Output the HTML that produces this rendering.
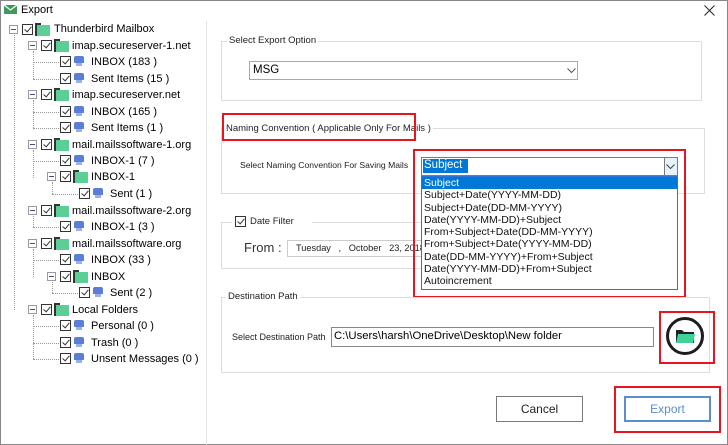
<!DOCTYPE html>
<html><head><meta charset="utf-8"><style>
*{margin:0;padding:0;box-sizing:border-box}
body{width:728px;height:445px;overflow:hidden;background:#fff;font-family:"Liberation Sans",Arial,sans-serif;position:relative;color:#000}
.a{position:absolute}
.win{left:0;top:0;width:728px;height:445px;border:1px solid #888}
.t{font-size:11px;white-space:nowrap}
.s{font-size:9.2px;white-space:nowrap;color:#222}
.cb{position:absolute;width:11px;height:11px;border:1px solid #333;background:#fff}
.cb:after{content:"";position:absolute;left:3px;top:0px;width:3px;height:6px;border:solid #333;border-width:0 1.5px 1.5px 0;transform:rotate(40deg)}
.ex{position:absolute;width:9px;height:9px;border:1px solid #9a9a9a;background:#fff}
.ex:after{content:"";position:absolute;left:1px;top:3px;width:5px;height:1px;background:#4a4a8a}
.fd{position:absolute;width:15px;height:11px;background:#5ccf96}
.fd:before{content:"";position:absolute;left:0;top:-2px;width:6px;height:2px;background:#333}
.fd:after{content:"";position:absolute;left:0;top:0;width:2px;height:11px;background:#333}
.ml{position:absolute;width:12px;height:11px}
.ml:before{content:"";position:absolute;left:1px;top:0;width:10px;height:7px;background:#5b7fd6;border-radius:2px 2px 0 0}
.ml:after{content:"";position:absolute;left:3px;top:7px;width:6px;height:3px;background:#9ab0e8}
.dv{position:absolute;border-left:1px dotted #999}
.dh{position:absolute;border-top:1px dotted #999}
.grp{position:absolute;border:1px solid #dcdcdc}
.gl{position:absolute;background:#fff;padding:0 2px;font-size:9.5px;color:#222}
.box{position:absolute;border:1px solid #a9a9a9;background:#fff}
.red{position:absolute;border:2px solid #e8141e}
.li{font-size:10.5px;height:12.3px;line-height:12.3px;padding-left:2px;color:#111}
</style></head><body>
<div class="a win"></div>
<svg class="a" style="left:4px;top:4px" width="14" height="11"><rect x="0" y="1" width="13" height="9" fill="#3c9a5a"/><path d="M0 1 L6.5 6 L13 1" stroke="#fff" fill="none" stroke-width="1.2"/></svg>
<div class="a t" style="left:21px;top:4px;font-size:11px">Export</div>
<svg class="a" style="left:704px;top:5px" width="11" height="11"><path d="M0.5 0.5 L10.5 10.5 M10.5 0.5 L0.5 10.5" stroke="#222" stroke-width="1"/></svg>
<div class="a" style="left:206px;top:21px;width:1px;height:424px;background:#e3e3e3"></div>

<div class="dv" style="left:14px;top:35px;height:275px"></div>
<div class="dv" style="left:33px;top:51px;height:28px"></div>
<div class="dv" style="left:33px;top:100px;height:28px"></div>
<div class="dv" style="left:33px;top:150px;height:28px"></div>
<div class="dv" style="left:52px;top:182px;height:12px"></div>
<div class="dv" style="left:33px;top:216px;height:11px"></div>
<div class="dv" style="left:33px;top:249px;height:28px"></div>
<div class="dv" style="left:52px;top:282px;height:11px"></div>
<div class="dv" style="left:33px;top:315px;height:44px"></div>
<div class="dh" style="left:33px;top:62px;width:26px"></div><div class="dh" style="left:33px;top:79px;width:26px"></div>
<div class="dh" style="left:33px;top:112px;width:26px"></div><div class="dh" style="left:33px;top:128px;width:26px"></div>
<div class="dh" style="left:33px;top:161px;width:26px"></div><div class="dh" style="left:52px;top:194px;width:26px"></div>
<div class="dh" style="left:33px;top:227px;width:26px"></div><div class="dh" style="left:33px;top:260px;width:26px"></div>
<div class="dh" style="left:52px;top:293px;width:26px"></div>
<div class="dh" style="left:33px;top:326px;width:26px"></div><div class="dh" style="left:33px;top:343px;width:26px"></div><div class="dh" style="left:33px;top:359px;width:26px"></div>

<div class="ex" style="left:9px;top:25px"></div><div class="cb" style="left:22px;top:24px"></div><div class="fd" style="left:35px;top:25px"></div><div class="a t" style="left:54px;top:23px">Thunderbird Mailbox</div>
<div class="ex" style="left:28px;top:41px"></div><div class="cb" style="left:41px;top:40px"></div><div class="fd" style="left:54px;top:41px"></div><div class="a t" style="left:72px;top:40px">imap.secureserver-1.net</div>
<div class="cb" style="left:60px;top:56px"></div><div class="ml" style="left:73px;top:56px"></div><div class="a t" style="left:91px;top:56px">INBOX (183 )</div>
<div class="cb" style="left:60px;top:73px"></div><div class="ml" style="left:73px;top:73px"></div><div class="a t" style="left:91px;top:73px">Sent Items (15 )</div>
<div class="ex" style="left:28px;top:90px"></div><div class="cb" style="left:41px;top:89px"></div><div class="fd" style="left:54px;top:90px"></div><div class="a t" style="left:72px;top:89px">imap.secureserver.net</div>
<div class="cb" style="left:60px;top:106px"></div><div class="ml" style="left:73px;top:106px"></div><div class="a t" style="left:91px;top:106px">INBOX (165 )</div>
<div class="cb" style="left:60px;top:122px"></div><div class="ml" style="left:73px;top:122px"></div><div class="a t" style="left:91px;top:122px">Sent Items (1 )</div>
<div class="ex" style="left:28px;top:140px"></div><div class="cb" style="left:41px;top:139px"></div><div class="fd" style="left:54px;top:140px"></div><div class="a t" style="left:72px;top:139px">mail.mailssoftware-1.org</div>
<div class="cb" style="left:60px;top:155px"></div><div class="ml" style="left:73px;top:155px"></div><div class="a t" style="left:91px;top:155px">INBOX-1 (7 )</div>
<div class="ex" style="left:47px;top:172px"></div><div class="cb" style="left:60px;top:171px"></div><div class="fd" style="left:73px;top:172px"></div><div class="a t" style="left:91px;top:171px">INBOX-1</div>
<div class="cb" style="left:79px;top:188px"></div><div class="ml" style="left:92px;top:188px"></div><div class="a t" style="left:110px;top:188px">Sent (1 )</div>
<div class="ex" style="left:28px;top:206px"></div><div class="cb" style="left:41px;top:205px"></div><div class="fd" style="left:54px;top:206px"></div><div class="a t" style="left:72px;top:205px">mail.mailssoftware-2.org</div>
<div class="cb" style="left:60px;top:221px"></div><div class="ml" style="left:73px;top:221px"></div><div class="a t" style="left:91px;top:221px">INBOX-1 (3 )</div>
<div class="ex" style="left:28px;top:239px"></div><div class="cb" style="left:41px;top:238px"></div><div class="fd" style="left:54px;top:239px"></div><div class="a t" style="left:72px;top:238px">mail.mailssoftware.org</div>
<div class="cb" style="left:60px;top:254px"></div><div class="ml" style="left:73px;top:254px"></div><div class="a t" style="left:91px;top:254px">INBOX (33 )</div>
<div class="ex" style="left:47px;top:272px"></div><div class="cb" style="left:60px;top:271px"></div><div class="fd" style="left:73px;top:272px"></div><div class="a t" style="left:91px;top:271px">INBOX</div>
<div class="cb" style="left:79px;top:287px"></div><div class="ml" style="left:92px;top:287px"></div><div class="a t" style="left:110px;top:287px">Sent (2 )</div>
<div class="ex" style="left:28px;top:305px"></div><div class="cb" style="left:41px;top:304px"></div><div class="fd" style="left:54px;top:305px"></div><div class="a t" style="left:72px;top:304px">Local Folders</div>
<div class="cb" style="left:60px;top:320px"></div><div class="ml" style="left:73px;top:320px"></div><div class="a t" style="left:91px;top:320px">Personal (0 )</div>
<div class="cb" style="left:60px;top:337px"></div><div class="ml" style="left:73px;top:337px"></div><div class="a t" style="left:91px;top:337px">Trash (0 )</div>
<div class="cb" style="left:60px;top:353px"></div><div class="ml" style="left:73px;top:353px"></div><div class="a t" style="left:91px;top:353px">Unsent Messages (0 )</div>

<div class="grp" style="left:221px;top:41px;width:481px;height:60px"></div>
<div class="gl" style="left:227px;top:35px">Select Export Option</div>
<div class="box" style="left:249px;top:61px;width:329px;height:19px"></div>
<div class="a t" style="left:253px;top:64px;font-size:11.5px">MSG</div>
<svg class="a" style="left:567px;top:68px" width="9" height="6"><path d="M0.5 0.5 L4.5 4.5 L8.5 0.5" stroke="#555" fill="none"/></svg>

<div class="grp" style="left:221px;top:128px;width:484px;height:66px"></div>
<div class="gl" style="left:224px;top:123px">Naming Convention ( Applicable Only For Mails )</div>
<div class="red" style="left:222px;top:113px;width:194px;height:28px"></div>
<div class="a s" style="left:240px;top:160px;font-size:8.6px">Select Naming Convention For Saving Mails</div>

<div class="grp" style="left:221px;top:222px;width:200px;height:47px;border-right:none"></div>
<div class="gl" style="left:232px;top:214px;width:80px;height:16px"></div>
<div class="cb" style="left:235px;top:216px"></div>
<div class="a s" style="left:250px;top:216px;font-size:9.5px">Date Filter</div>
<div class="a t" style="left:244px;top:240px;font-size:13px;color:#333">From :</div>
<div class="box" style="left:287px;top:240px;width:140px;height:17px;border-color:#ccc"></div>
<div class="a s" style="left:296px;top:243px">Tuesday &nbsp;&nbsp;,&nbsp;&nbsp; October &nbsp;&nbsp;23, 2018</div>

<div class="a" style="left:421px;top:157px;width:257px;height:19px;border:1px solid #7a7a7a;background:#fff"></div>
<div class="a" style="left:423px;top:159px;width:45px;height:14px;background:#0078d7"></div>
<div class="a" style="left:424px;top:159px;font-size:11.5px;color:#fff">Subject</div>
<div class="a" style="left:664px;top:158px;width:13px;height:17px;background:#e5f1fb;border-left:1px solid #7a7a7a"></div>
<svg class="a" style="left:666px;top:164px" width="9" height="6"><path d="M0.5 0.5 L4.5 4.5 L8.5 0.5" stroke="#444" fill="none"/></svg>
<div class="a" style="left:421px;top:176px;width:257px;height:114px;border:1px solid #2d74d8;background:#fff">
<div class="li" style="background:#0078d7;color:#fff">Subject</div>
<div class="li">Subject+Date(YYYY-MM-DD)</div>
<div class="li">Subject+Date(DD-MM-YYYY)</div>
<div class="li">Date(YYYY-MM-DD)+Subject</div>
<div class="li">From+Subject+Date(DD-MM-YYYY)</div>
<div class="li">From+Subject+Date(YYYY-MM-DD)</div>
<div class="li">Date(DD-MM-YYYY)+From+Subject</div>
<div class="li">Date(YYYY-MM-DD)+From+Subject</div>
<div class="li">Autoincrement</div>
</div>
<div class="red" style="left:413px;top:149px;width:273px;height:149px"></div>

<div class="grp" style="left:221px;top:297px;width:489px;height:76px"></div>
<div class="gl" style="left:226px;top:291px">Destination Path</div>
<div class="a s" style="left:232px;top:332px;font-size:9px">Select Destination Path</div>
<div class="box" style="left:331px;top:327px;width:323px;height:20px;border-color:#888"></div>
<div class="a t" style="left:334px;top:330px;font-size:11.3px">C:\Users\harsh\OneDrive\Desktop\New folder</div>
<div class="a" style="left:666px;top:317px;width:38px;height:38px;border-radius:50%;border:3px solid #1c1c1c;background:#fff"></div>
<svg class="a" style="left:676px;top:329px" width="19" height="15"><path d="M0 1 H6 L8 3 H18 V14 H0 Z" fill="#222"/><path d="M2 5 H19 L17 14 H0 Z" fill="#3fd39a"/></svg>
<div class="red" style="left:659px;top:311px;width:56px;height:53px"></div>

<div class="a" style="left:496px;top:396px;width:87px;height:26px;border:1px solid #7a7a7a;background:#fff;font-size:12px;text-align:center;line-height:24px;color:#222">Cancel</div>
<div class="a" style="left:624px;top:396px;width:87px;height:26px;border:2px solid #5b8dd0;background:#fff;font-size:12px;text-align:center;line-height:22px;color:#5b8dd0">Export</div>
<div class="red" style="left:614px;top:386px;width:107px;height:47px"></div>
</body></html>
